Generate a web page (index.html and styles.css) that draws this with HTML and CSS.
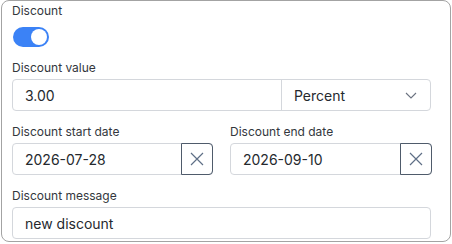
FILE: index.html
```html
<!DOCTYPE html>
<html>
<head>
<meta charset="utf-8">
<link rel="stylesheet" href="styles.css">
</head>
<body>
<div class="card">
  <div class="field first">
    <div class="label">Discount</div>
    <div class="toggle"><span class="knob"></span></div>
  </div>
  <div class="field">
    <div class="label">Discount value</div>
    <div class="group">
      <div class="value">3.00</div>
      <div class="select">
        <span>Percent</span>
        <svg class="chev" width="12" height="7" viewBox="0 0 12 7"><path d="M1 1 L6 6 L11 1" fill="none" stroke="#6b7280" stroke-width="1.1"/></svg>
      </div>
    </div>
  </div>
  <div class="row">
    <div class="field">
      <div class="label">Discount start date</div>
      <div class="date">
        <div class="dval">2026-07-28</div>
        <div class="clear"><svg width="14" height="14" viewBox="0 0 14 14"><path d="M1 1 L13 13 M13 1 L1 13" fill="none" stroke="#5f6f86" stroke-width="1.2"/></svg></div>
      </div>
    </div>
    <div class="field">
      <div class="label">Discount end date</div>
      <div class="date">
        <div class="dval">2026-09-10</div>
        <div class="clear"><svg width="14" height="14" viewBox="0 0 14 14"><path d="M1 1 L13 13 M13 1 L1 13" fill="none" stroke="#5f6f86" stroke-width="1.2"/></svg></div>
      </div>
    </div>
  </div>
  <div class="field">
    <div class="label">Discount message</div>
    <div class="input">new discount</div>
  </div>
</div>
</body>
</html>
```
FILE: styles.css
```css
* { box-sizing: border-box; }
html, body { margin: 0; padding: 0; background: #fff; }
body { font-family: Inter, "Noto Sans", sans-serif; color: #2a2e34; }
.card {
  margin: 0 1px;
  width: 450px;
  height: 242px;
  border: 1px solid #a3a3a3;
  border-radius: 8px;
  padding: 2px 19px 0 10px;
  display: flex;
  flex-direction: column;
  gap: 13px;
}
.field { display: flex; flex-direction: column; gap: 3px; }
.field.first { gap: 8px; }
.label { font-size: 12px; line-height: 16px; color: #33373d; }
.toggle {
  width: 36px; height: 20px; border-radius: 10px; background: #3b82f6;
  margin-left: 1px; position: relative;
}
.knob {
  position: absolute; right: 2px; top: 2px; width: 16px; height: 16px;
  border-radius: 50%; background: #fff;
}
.group {
  display: flex; height: 32px; border: 1px solid #d4d7dc; border-radius: 4px;
  font-size: 14px; color: #25292e;
}
.value { flex: 1; padding-left: 12px; display: flex; align-items: center; }
.select {
  width: 149px; border-left: 1px solid #d4d7dc; display: flex; align-items: center;
  justify-content: space-between; padding: 0 13px 0 12px;
}
.row { display: grid; grid-template-columns: 201px 202px; column-gap: 17px; }
.date {
  display: flex; height: 32px; border: 1px solid #d4d7dc; border-radius: 4px;
  font-size: 14px; color: #25292e;
}
.dval { flex: 1; padding-left: 12px; display: flex; align-items: center; }
.clear {
  width: 32px; margin: -1px -1px -1px 0; border: 1px solid #4f5b6b;
  border-radius: 0 4px 4px 0; display: flex; align-items: center; justify-content: center;
}
.input {
  height: 32px; border: 1px solid #d4d7dc; border-radius: 4px; font-size: 14px;
  color: #25292e; padding-left: 12px; display: flex; align-items: center;
}
```
